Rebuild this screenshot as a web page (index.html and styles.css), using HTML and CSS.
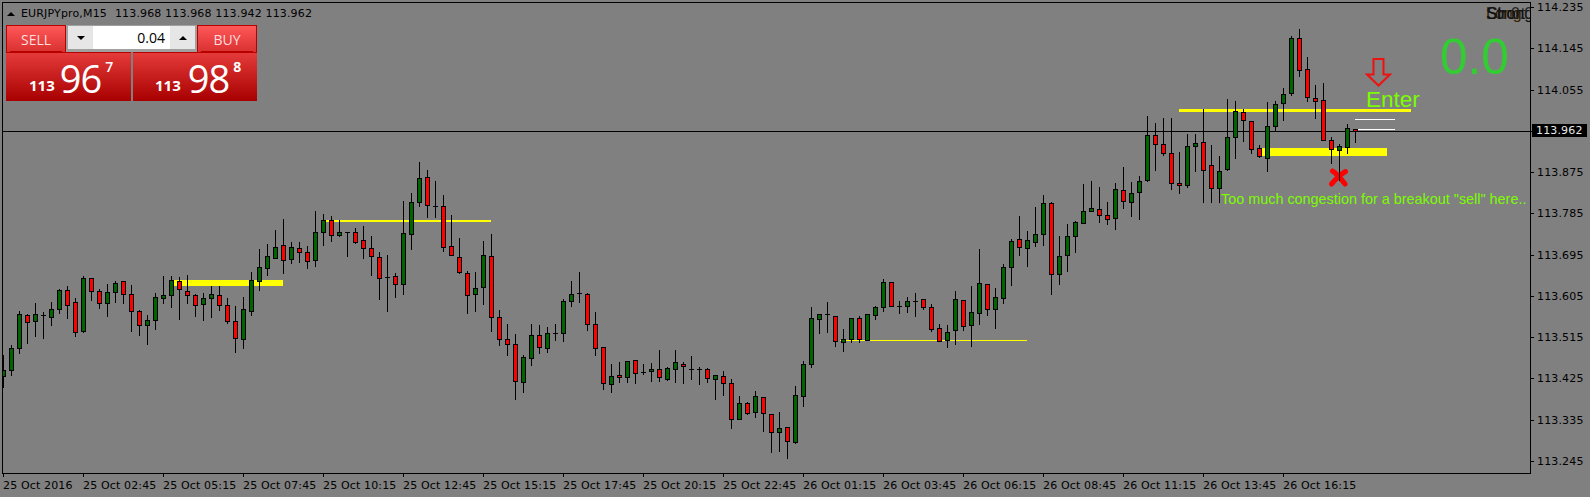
FILE: index.html
```html
<!DOCTYPE html>
<html lang="en">
<head>
<meta charset="utf-8">
<title>EURJPYpro,M15</title>
<link rel="stylesheet" href="styles.css">
</head>
<body>
<main class="terminal">
  <div class="top-row">
    <section class="plot">
      <svg class="canvas" id="canvas" viewBox="3 3 1527 470" width="1527" height="470" xmlns="http://www.w3.org/2000/svg">
        <rect class="price-line" x="3" y="131" width="1527" height="1"/>
        <rect class="level" x="174" y="280" width="109" height="6"/>
        <rect class="level" x="326" y="220" width="165" height="2"/>
        <rect class="level" x="840" y="340" width="187" height="1"/>
        <rect class="level" x="1179" y="109" width="232" height="3"/>
        <rect class="level" x="1262" y="148" width="125" height="8"/>
        <rect class="white-line" x="1355" y="119" width="40" height="1"/>
        <rect class="white-line" x="1355" y="129" width="40" height="1"/>
        <path class="arrow" d="M1373.5 59H1383.5V74.5H1390L1378.5 85.5L1367 74.5H1373.5Z"/>
        <path class="cross" d="M1332.5 171C1336 173 1342 180 1345 184M1345.5 171.5C1341 174 1335 180 1331.5 184"/>
        <g id="candles"></g>
        <text class="enter" x="1366" y="107">Enter</text>
        <text class="big-value" x="1440" y="74">0.0</text>
        <text class="note" x="1221" y="204">Too much congestion for a breakout "sell" here..</text>
      </svg>

      <header class="chart-title">
        <span class="tri-up tri-title"></span>
        <span class="symbol">EURJPYpro,M15</span>
        <span class="ohlc">113.968 113.968 113.942 113.962</span>
      </header>

      <div class="signal-stack">
        <span class="sig sig-a">Long</span>
        <span class="sig sig-b">Short</span>
        <span class="sig sig-c">Strong</span>
        <span class="sig sig-d">0.0</span>
      </div>

      <div class="trade-panel">
        <div class="trade-top">
          <button class="tab">SELL</button>
          <div class="spin">
            <span class="spin-btn"><span class="tri-down"></span></span>
            <span class="spin-val">0.04</span>
            <span class="spin-btn"><span class="tri-up"></span></span>
          </div>
          <button class="tab">BUY</button>
        </div>
        <div class="trade-bottom">
          <div class="quote quote-sell">
            <span class="q-small">113</span><span class="q-big">96</span><span class="q-sup">7</span>
          </div>
          <div class="quote quote-buy">
            <span class="q-small">113</span><span class="q-big">98</span><span class="q-sup q-sup-bold">8</span>
          </div>
        </div>
      </div>
    </section>

    <aside class="yaxis">
      <div class="ytick">114.235</div>
      <div class="ytick">114.145</div>
      <div class="ytick">114.055</div>
      <div class="ytick"></div>
      <div class="ytick">113.875</div>
      <div class="ytick">113.785</div>
      <div class="ytick">113.695</div>
      <div class="ytick">113.605</div>
      <div class="ytick">113.515</div>
      <div class="ytick">113.425</div>
      <div class="ytick">113.335</div>
      <div class="ytick">113.245</div>
      <div class="price-tag">113.962</div>
    </aside>
  </div>

  <footer class="xaxis">
    <div class="xtick">25 Oct 2016</div>
    <div class="xtick">25 Oct 02:45</div>
    <div class="xtick">25 Oct 05:15</div>
    <div class="xtick">25 Oct 07:45</div>
    <div class="xtick">25 Oct 10:15</div>
    <div class="xtick">25 Oct 12:45</div>
    <div class="xtick">25 Oct 15:15</div>
    <div class="xtick">25 Oct 17:45</div>
    <div class="xtick">25 Oct 20:15</div>
    <div class="xtick">25 Oct 22:45</div>
    <div class="xtick">26 Oct 01:15</div>
    <div class="xtick">26 Oct 03:45</div>
    <div class="xtick">26 Oct 06:15</div>
    <div class="xtick">26 Oct 08:45</div>
    <div class="xtick">26 Oct 11:15</div>
    <div class="xtick">26 Oct 13:45</div>
    <div class="xtick">26 Oct 16:15</div>
  </footer>
</main>
<script src="script.js"></script>
</body>
</html>
```
FILE: styles.css
```css
* { box-sizing: border-box; }
html, body { margin: 0; padding: 0; }
body {
  width: 1590px;
  height: 497px;
  background: #808080;
  overflow: hidden;
  font-family: "DejaVu Sans", sans-serif;
  font-size: 11px;
  letter-spacing: 0.15px;
  color: #000;
}
.terminal { display: flex; flex-direction: column; padding: 2px 0 0 2px; }
.top-row { display: flex; height: 472px; }

/* plot */
.plot {
  position: relative;
  width: 1529px;
  height: 472px;
  border: 1px solid #000;
  flex: none;
}
.canvas { display: block; shape-rendering: crispEdges; }
.price-line { fill: #000; }
.level { fill: #ffff00; }
.white-line { fill: #fff; }
.wick, .body-edge { fill: #000; }
.bull { fill: #006400; }
.bear { fill: #ff0000; }
.arrow { fill: #808080; stroke: #ee1111; stroke-width: 2; shape-rendering: auto; }
.cross { fill: none; stroke: #ff0000; stroke-width: 5; stroke-linecap: round; shape-rendering: auto; }
.enter, .big-value, .note { font-family: "Liberation Sans", Arial, sans-serif; letter-spacing: 0; }
.enter { font-size: 22.5px; fill: #7cfc00; }
.big-value { font-size: 49.5px; fill: #32cd32; }
.note { font-size: 14.4px; fill: #7cfc00; }

/* title */
.chart-title {
  position: absolute;
  left: 4px;
  top: 4px;
  display: flex;
  align-items: center;
  white-space: nowrap;
  line-height: 14px;
}
.tri-title { margin-right: 6px; }
.symbol { margin-right: 8px; }
.tri-up, .tri-down { display: block; width: 0; height: 0; border-left: 4px solid transparent; border-right: 4px solid transparent; }
.tri-up { border-bottom: 4px solid #000; }
.tri-down { border-top: 4px solid #000; }

/* stacked signal labels */
.signal-stack {
  position: absolute;
  right: 0;
  top: 1px;
  width: 44px;
  height: 20px;
  display: grid;
  overflow: hidden;
  font-family: "Liberation Sans", Arial, sans-serif;
  font-size: 16px;
  letter-spacing: 0;
  line-height: 20px;
}
.sig { grid-area: 1 / 1; white-space: nowrap; }
.sig-a { justify-self: start; color: #3a2400; }
.sig-b { justify-self: start; margin-left: 1px; color: #1a1a1a; }
.sig-c { justify-self: end; color: #111; }
.sig-d { justify-self: end; color: #222; }

/* one-click trade panel */
.trade-panel {
  position: absolute;
  left: 3px;
  top: 22px;
  width: 251px;
  font-family: "Open Sans", sans-serif;
  letter-spacing: 0;
  color: #fff;
}
.trade-top { display: flex; height: 27px; }
.tab {
  width: 60px;
  height: 27px;
  flex: none;
  padding: 2px 0 0;
  border: 1px solid #b80000;
  border-bottom: none;
  background: linear-gradient(#ff5858, #d93030);
  color: #ffdede;
  font: 14px/22px "Open Sans", sans-serif;
  position: relative;
}
.tab::after {
  content: "";
  position: absolute;
  left: 3px;
  right: 3px;
  bottom: 0;
  height: 1px;
  background: #b80000;
}
.spin {
  flex: none;
  width: 131px;
  height: 27px;
  display: flex;
  background: #a0a0a0;
  padding: 1px 2px 3px;
  color: #000;
}
.spin-btn {
  width: 25px;
  flex: none;
  background: #e6e6e6;
  display: flex;
  align-items: center;
  justify-content: center;
}
.spin-val {
  flex: 1;
  background: #fff;
  text-align: right;
  padding-right: 5px;
  font-size: 14px;
  line-height: 23px;
}
.trade-bottom { display: flex; gap: 2px; height: 49px; }
.quote {
  width: 125px;
  flex: none;
  border-top: 1px solid #b80000;
  background: linear-gradient(#e43a3a, #a80000);
  display: flex;
  align-items: flex-end;
  padding: 0 0 8px 23px;
  position: relative;
}
.quote-buy { width: 124px; padding-left: 22px; }
.q-small { font-size: 15px; font-weight: 700; line-height: 15px; margin-right: 7px; }
.quote-sell .q-small { margin-right: 5px; }
.q-big { font-size: 38px; line-height: 30px; letter-spacing: -1px; margin-right: 4px; }
.q-sup { font-size: 14px; font-weight: 600; line-height: 14px; align-self: flex-start; margin-top: 7px; }
.q-sup-bold { font-weight: 700; }

/* right axis */
.yaxis { position: relative; width: 59px; flex: none; margin-top: -1px; }
.ytick {
  position: relative;
  height: 41.25px;
  line-height: 14px;
  padding-left: 6px;
  white-space: nowrap;
}
.ytick::before {
  content: "";
  position: absolute;
  left: 0;
  top: 6px;
  width: 3px;
  height: 1px;
  background: #000;
}
.price-tag {
  position: absolute;
  left: 1px;
  top: 123px;
  width: 55px;
  height: 13px;
  background: #000;
  color: #e8e8e8;
  line-height: 13px;
  padding-left: 4px;
}

/* bottom axis */
.xaxis { display: flex; padding-left: 1px; }
.xtick {
  width: 80px;
  flex: none;
  position: relative;
  padding-top: 5px;
  line-height: 13px;
  white-space: nowrap;
}
.xtick::before {
  content: "";
  position: absolute;
  left: 0;
  top: 0;
  width: 1px;
  height: 3px;
  background: #000;
}
```
FILE: script.js
```javascript
// Candles: [type, wickTop, bodyTop, bodyBottom, wickBottom]. g = up, r = down.
// Each group stores values on its own scale: y = base + value * scale.
var groups = [
  { base: 260, scale: 1 / 3, bars: [
    ["g",285,331,349,380],["g",255,265,331,345],["g",153,163,263,278],["r",163,166,187,248],
    ["g",128,163,184,227],["g",155,166,166,233],["g",126,148,172,194],["g",88,91,148,158],
    ["r",78,91,136,173],["r",115,127,217,227],["g",48,55,214,215],["r",55,55,94,120],
    ["r",88,94,130,143],["g",72,97,130,167],["g",64,70,97,125],["r",62,64,103,128],
    ["r",75,103,154,212],["r",151,154,196,224],["g",165,181,196,251],["g",100,112,181,207],
    ["g",48,106,115,130],["g",48,61,106,140],["r",52,64,88,176],["r",45,94,106,130],
    ["r",103,106,136,167],["g",100,115,133,179],["g",79,103,115,170],["r",79,106,136,149],
    ["r",114,136,184,188],["r",138,184,235,275],["g",112,148,238,263],["g",37,61,154,164]
  ]},
  { base: 0, scale: 1, bars: [
    ["g",249,267,281,290],["g",244,256,268,275],["g",230,247,258,258],["r",219,245,260,273],
    ["g",242,247,259,263],["r",242,248,252,262],["r",246,252,261,268],["g",211,232,260,266],
    ["g",214,220,232,245],["r",216,220,235,241],["g",220,232,235,236],["g",232,232,232,256],
    ["r",228,232,242,243],["r",226,240,248,258],["r",236,248,256,275],["r",252,257,278,299],
    ["g",255,277,277,311],["r",273,276,284,297]
  ]},
  { base: 150, scale: 1 / 3, bars: [
    ["g",153,250,403,432],["g",130,157,253,297],["g",37,85,157,167],["r",61,82,166,200],
    ["g",94,167,167,200],["r",136,169,292,303],["r",196,289,316,316],["r",265,322,367,370],
    ["r",364,370,436,488],["g",367,415,433,482],["g",274,316,412,461],["r",253,319,502,542],
    ["r",481,502,568,584],["r",523,568,583,614],["r",553,583,694,746],["g",616,622,697,725],
    ["g",523,556,625,644],["r",526,556,592,610],["g",532,550,595,605],["g",523,550,550,570],
    ["g",448,454,550,572],["g",394,433,454,469],["g",367,430,430,455],["r",430,433,523,539],
    ["r",487,523,595,614],["r",592,592,700,716],["g",643,679,703,725],["r",637,676,682,695],
    ["g",634,634,682,695],["r",631,631,670,698],["g",643,665,665,673],["g",640,658,664,692],
    ["r",601,658,682,692],["g",652,655,688,689],["g",601,637,658,695],["r",637,643,649,698],
    ["g",619,656,656,686],["g",650,656,656,701],["r",655,658,685,695],["g",676,676,688,746],
    ["r",664,679,700,734],["r",688,700,808,833],["g",739,760,808,808],["r",755,760,790,793],
    ["g",724,739,787,800],["r",742,742,790,842],["r",793,793,847,905],["g",787,835,847,902],
    ["r",832,832,874,923],["g",709,736,877,878]
  ]},
  { base: 100, scale: 1 / 3, bars: [
    ["g",784,793,889,917],["g",622,655,793,802],["g",643,643,658,698],["g",607,643,643,695],
    ["r",649,649,724,737],["g",688,718,727,752],["g",655,655,718,725],["r",649,655,718,727],
    ["g",643,643,721,721],["g",619,622,646,656],["g",538,547,622,632],["r",547,547,619,619],
    ["g",604,617,617,638],["g",592,604,619,635],["g",580,602,602,647],["r",598,598,622,628],
    ["r",613,622,688,692],["r",673,685,724,724],["g",676,697,721,740],["g",574,598,691,731],
    ["r",601,601,679,689],["g",558,637,676,737],["g",448,550,640,671],["r",553,553,628,646],
    ["g",565,592,628,683],["g",492,502,595,608],["g",418,424,502,554],["r",349,418,442,464],
    ["g",394,421,445,497],["g",322,403,427,437],["g",286,310,403,434],["r",307,310,523,581],
    ["g",409,469,523,551],["g",373,409,466,512],["g",364,367,409,455],["g",253,334,370,370],
    ["g",244,325,334,334],["r",262,328,346,367],["r",307,346,358,371],["g",250,268,355,386],
    ["r",202,271,304,325],["g",247,280,307,347],["g",229,244,277,356],["g",49,106,241,244],
    ["r",70,106,133,209],["r",55,133,160,166],["r",55,160,250,268],["r",157,250,256,278],
    ["g",103,139,256,262],["g",103,130,139,212]
  ]},
  { base: 0, scale: 1 / 3, bars: [
    ["r",328,427,511,605],["r",435,496,565,605],["g",468,514,565,605],["g",297,412,508,510],
    ["g",304,334,412,475],["r",328,337,361,422],["r",364,364,448,460],["r",436,445,469,472],
    ["g",306,379,475,512],["g",304,313,379,394],["g",265,283,310,360],["g",109,115,280,286],
    ["r",88,115,211,229],["r",172,208,292,304],["r",256,295,304,353],["r",250,301,421,421],
    ["r",412,421,448,490],["g",433,439,451,540],["g",373,385,442,458],["r",388,388,394,425]
  ]}
];

var NS = "http://www.w3.org/2000/svg";
var layer = document.getElementById("candles");

function rect(cls, x, y, w, h) {
  var el = document.createElementNS(NS, "rect");
  el.setAttribute("class", cls);
  el.setAttribute("x", x);
  el.setAttribute("y", y);
  el.setAttribute("width", w);
  el.setAttribute("height", h);
  layer.appendChild(el);
}

var n = 0;
groups.forEach(function (group) {
  group.bars.forEach(function (bar) {
    var col = 3 + 8 * n;
    var to = function (v) { return Math.round(group.base + v * group.scale); };
    var wickTop = to(bar[1]), top = to(bar[2]), bottom = to(bar[3]), wickBottom = to(bar[4]);
    rect("wick", col, wickTop, 1, wickBottom - wickTop + 1);
    rect("body-edge", col - 2, top, 5, bottom - top + 1);
    if (bottom - top >= 2) {
      rect(bar[0] === "g" ? "bull" : "bear", col - 1, top + 1, 3, bottom - top - 1);
    } else if (bottom - top === 1 && bar[2] !== bar[3]) {
      rect(bar[0] === "g" ? "bull" : "bear", col - 1, top, 3, 1);
    }
    n++;
  });
});
```
